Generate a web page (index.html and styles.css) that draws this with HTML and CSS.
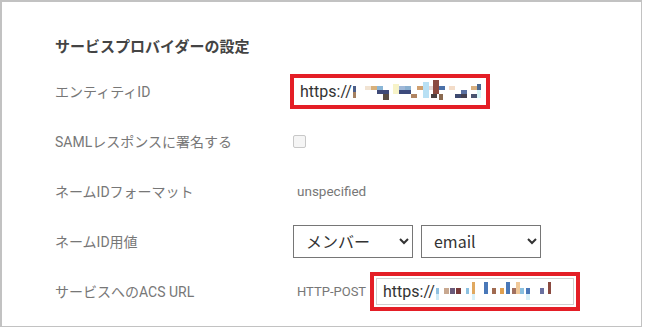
FILE: index.html
```html
<!DOCTYPE html>
<html lang="ja">
<head>
    <meta charset="UTF-8">
    <meta name="viewport" content="width=device-width, initial-scale=1.0">
    <title>サービスプロバイダーの設定</title>
    <link rel="stylesheet" href="styles.css">
</head>
<body>
    <div class="panel">
        <h2 class="title">サービスプロバイダーの設定</h2>

        <div class="row">
            <div class="label">エンティティID</div>
            <div class="value">
                <span class="mark mark-text">https://<svg class="mosaic" width="132" height="22" viewBox="0 0 132 22">
                    <rect x="0" y="6" width="3" height="6" fill="#4a5d8a"/>
                    <rect x="0" y="12" width="3" height="6" fill="#a48060"/>
                    <rect x="12" y="6" width="6" height="4" fill="#f1e3d2"/>
                    <rect x="18" y="6" width="6" height="4" fill="#d8b07a"/>
                    <rect x="24" y="6" width="6" height="4" fill="#8ab6d6"/>
                    <rect x="24" y="10" width="12" height="4" fill="#3f4a78"/>
                    <rect x="30" y="14" width="6" height="6" fill="#5a4e44"/>
                    <rect x="40" y="4" width="6" height="10" fill="#f7f3c8"/>
                    <rect x="46" y="6" width="6" height="4" fill="#9fb8d8"/>
                    <rect x="46" y="10" width="12" height="4" fill="#3d4a7c"/>
                    <rect x="52" y="6" width="6" height="4" fill="#8ab0d0"/>
                    <rect x="58" y="14" width="6" height="4" fill="#b08462"/>
                    <rect x="64" y="6" width="6" height="4" fill="#d0a070"/>
                    <rect x="70" y="2" width="6" height="16" fill="#b8e0f4"/>
                    <rect x="76" y="6" width="6" height="4" fill="#e6d8d4"/>
                    <rect x="80" y="0" width="6" height="14" fill="#8a4a40"/>
                    <rect x="78" y="14" width="6" height="4" fill="#4a4040"/>
                    <rect x="86" y="6" width="6" height="4" fill="#4a70a8"/>
                    <rect x="86" y="14" width="4" height="6" fill="#8a6a50"/>
                    <rect x="96" y="6" width="6" height="4" fill="#f3dcc8"/>
                    <rect x="102" y="14" width="6" height="4" fill="#3e4a70"/>
                    <rect x="108" y="10" width="6" height="4" fill="#5a70a0"/>
                    <rect x="108" y="14" width="6" height="4" fill="#444050"/>
                    <rect x="118" y="6" width="6" height="4" fill="#d8b080"/>
                    <rect x="118" y="14" width="6" height="4" fill="#4a5470"/>
                    <rect x="124" y="4" width="4" height="6" fill="#4a6890"/>
                    <rect x="124" y="10" width="4" height="8" fill="#d8f6f8"/>
                </svg></span>
            </div>
        </div>

        <div class="row">
            <div class="label">SAMLレスポンスに署名する</div>
            <div class="value">
                <input type="checkbox" class="check" disabled>
            </div>
        </div>

        <div class="row">
            <div class="label">ネームIDフォーマット</div>
            <div class="value">
                <span class="plain">unspecified</span>
            </div>
        </div>

        <div class="row">
            <div class="label">ネームID用値</div>
            <div class="value selects">
                <select class="select">
                    <option>メンバー</option>
                </select>
                <select class="select">
                    <option>email</option>
                </select>
            </div>
        </div>

        <div class="row">
            <div class="label">サービスへのACS URL</div>
            <div class="value">
                <span class="plain binding">HTTP-POST</span>
                <span class="mark">
                    <span class="url-box">https://<svg class="mosaic" width="118" height="22" viewBox="0 0 118 22">
                        <rect x="0" y="8" width="3" height="6" fill="#8fc0e0"/>
                        <rect x="0" y="14" width="3" height="6" fill="#d0ecf8"/>
                        <rect x="8" y="8" width="5" height="6" fill="#c8a890"/>
                        <rect x="14" y="8" width="5" height="6" fill="#6a5a7a"/>
                        <rect x="20" y="8" width="5" height="6" fill="#7a3a3a"/>
                        <rect x="30" y="8" width="3" height="6" fill="#8cc0e0"/>
                        <rect x="36" y="2" width="3" height="12" fill="#e0a860"/>
                        <rect x="36" y="14" width="3" height="6" fill="#d8f0f8"/>
                        <rect x="48" y="2" width="4" height="12" fill="#4a78b8"/>
                        <rect x="56" y="8" width="4" height="6" fill="#a06a50"/>
                        <rect x="64" y="8" width="4" height="6" fill="#e0a050"/>
                        <rect x="70" y="2" width="4" height="12" fill="#4a78b8"/>
                        <rect x="76" y="8" width="4" height="6" fill="#a07060"/>
                        <rect x="80" y="2" width="4" height="12" fill="#f0c898"/>
                        <rect x="84" y="8" width="4" height="6" fill="#8ac0e0"/>
                        <rect x="90" y="8" width="4" height="6" fill="#4a78b8"/>
                        <rect x="90" y="14" width="4" height="6" fill="#d8f0f8"/>
                        <rect x="104" y="8" width="4" height="6" fill="#6a70a0"/>
                        <rect x="112" y="2" width="3" height="12" fill="#8a4a40"/>
                    </svg></span>
                </span>
            </div>
        </div>
    </div>
</body>
</html>
```

FILE: styles.css
```css
html, body {
    margin: 0;
    padding: 0;
    background-color: #ffffff;
}
body {
    font-family: Roboto, "Noto Sans CJK JP", sans-serif;
    color: #333;
}
.panel {
    width: 642px;
    height: 327px;
    border: 1px solid #c2c2c2;
    border-top-width: 2px;
    border-left-width: 2px;
    padding: 0 0 0 53px;
    box-sizing: border-box;
    overflow: hidden;
}
.title {
    margin: 0;
    padding: 33px 0 0 0;
    height: 31px;
    font-family: "Noto Sans CJK JP", sans-serif;
    font-size: 15px;
    font-weight: bold;
    color: #444;
    line-height: 22px;
}
.row {
    display: flex;
    align-items: center;
    height: 50px;
}
.label {
    width: 238px;
    font-size: 14px;
    color: #777;
    flex-shrink: 0;
}
.value {
    display: flex;
    align-items: center;
}
.mark {
    display: inline-flex;
    align-items: center;
    border: 4px solid #e41e26;
}
.mark-text {
    width: 186px;
    height: 27px;
    padding: 0 0 0 6px;
    font-size: 16px;
    color: #333;
    margin-left: -3px;
}
.mosaic {
    display: inline-block;
    margin-left: 1px;
}
.check {
    appearance: none;
    margin: 0;
    width: 13px;
    height: 13px;
    border: 1px solid #c8c8c8;
    border-radius: 2px;
    background-color: #f5f5f5;
}
.plain {
    font-size: 13.5px;
    color: #777;
    padding-left: 4px;
}
.selects {
    gap: 8px;
}
.select {
    width: 120px;
    height: 33px;
    border: 1px solid #767676;
    border-radius: 0;
    background-color: #fff;
    font-family: "Noto Sans CJK JP", Roboto, sans-serif;
    font-size: 16px;
    color: #333;
    padding: 0 4px 0 8px;
}
.binding {
    width: 73px;
    font-size: 13px;
    white-space: nowrap;
}
.mark .url-box {
    display: flex;
    align-items: center;
    width: 190px;
    height: 25px;
    margin: 2px;
    padding-left: 6px;
    border: 1px solid #d0d0d0;
    font-size: 16px;
    color: #333;
}
```
